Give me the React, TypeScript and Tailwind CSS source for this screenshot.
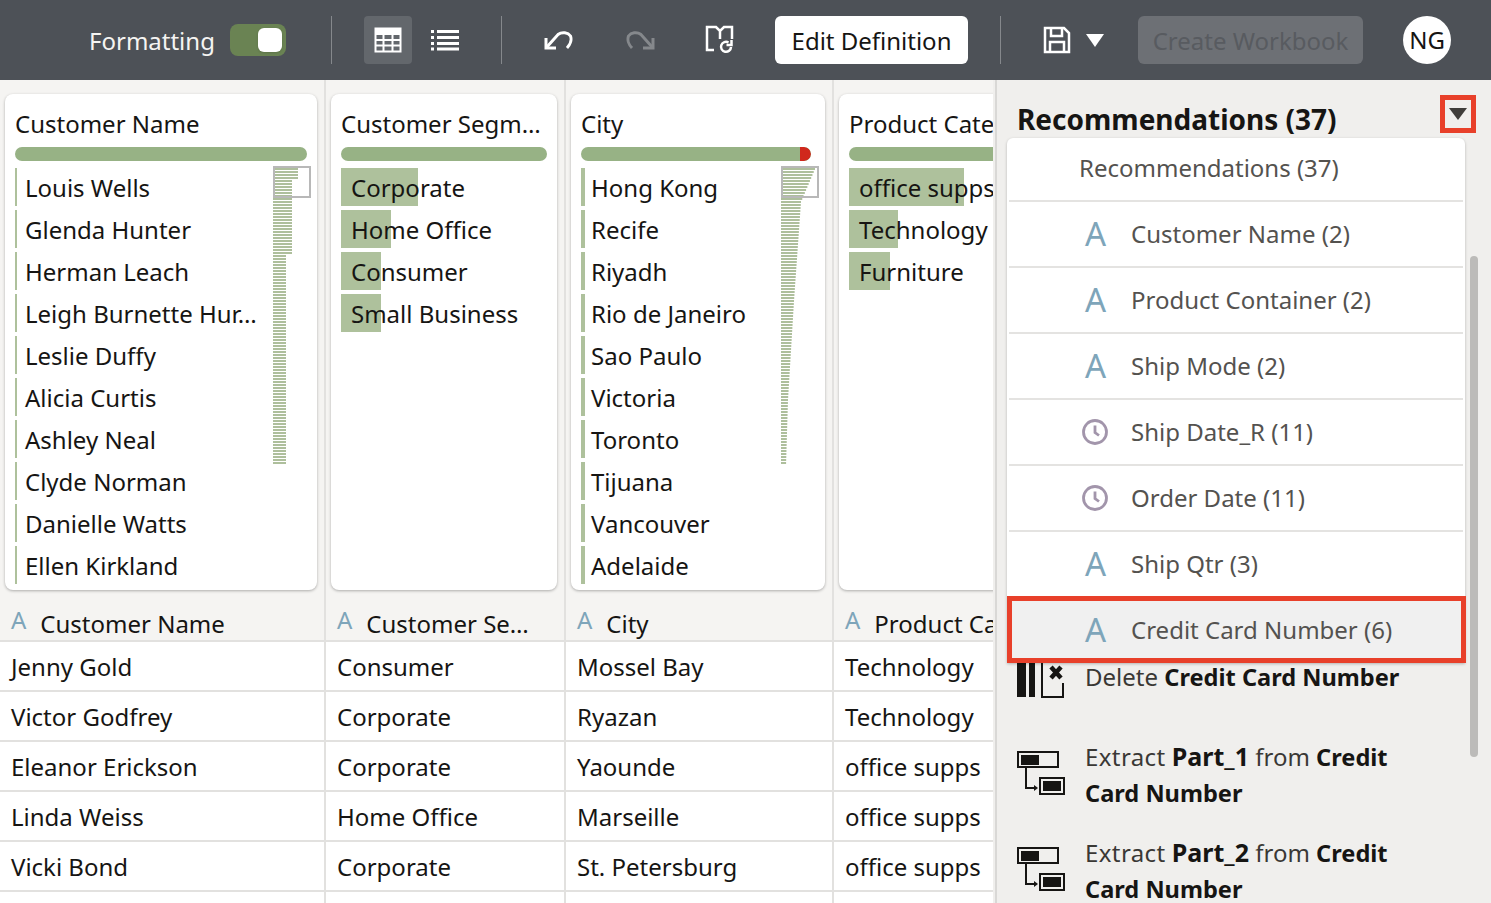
import React from "react";

const font = "font-['Noto_Sans','Open_Sans',sans-serif]";

type FilterRow = { label: string; pct: number };

const customers = ["Louis Wells", "Glenda Hunter", "Herman Leach", "Leigh Burnette Hur…", "Leslie Duffy", "Alicia Curtis", "Ashley Neal", "Clyde Norman", "Danielle Watts", "Ellen Kirkland"];
const cities = ["Hong Kong", "Recife", "Riyadh", "Rio de Janeiro", "Sao Paulo", "Victoria", "Toronto", "Tijuana", "Vancouver", "Adelaide"];

const columns = [
  {
    width: "w-[326px]",
    barMargin: "mr-[10px]",
    title: "Customer Name",
    head: "Customer Name",
    rows: customers.map((label) => ({ label, pct: 2 })),
    cells: ["Jenny Gold", "Victor Godfrey", "Eleanor Erickson", "Linda Weiss", "Vicki Bond"],
    chart: "customer",
  },
  {
    width: "w-[240px]",
    barMargin: "mr-[10px]",
    title: "Customer Segm…",
    head: "Customer Se…",
    rows: [
      { label: "Corporate", pct: 77 },
      { label: "Home Office", pct: 50 },
      { label: "Consumer", pct: 40 },
      { label: "Small Business", pct: 40 },
    ],
    cells: ["Consumer", "Corporate", "Corporate", "Home Office", "Corporate"],
  },
  {
    width: "w-[268px]",
    barMargin: "mr-[14px]",
    title: "City",
    head: "City",
    rows: cities.map((label) => ({ label, pct: 4 })),
    cells: ["Mossel Bay", "Ryazan", "Yaounde", "Marseille", "St. Petersburg"],
    chart: "city",
    red: true,
  },
  {
    width: "w-[162px]",
    barMargin: "mr-0 rounded-r-none",
    title: "Product Category",
    head: "Product Category",
    rows: [
      { label: "office supps", pct: 115 },
      { label: "Technology", pct: 49 },
      { label: "Furniture", pct: 41 },
    ],
    cells: ["Technology", "Technology", "office supps", "office supps", "office supps"],
    clip: true,
  },
];

const menuItems = [
  { label: "Customer Name (2)", type: "text" },
  { label: "Product Container (2)", type: "text" },
  { label: "Ship Mode (2)", type: "text" },
  { label: "Ship Date_R (11)", type: "date" },
  { label: "Order Date (11)", type: "date" },
  { label: "Ship Qtr (3)", type: "text" },
];

// widths of the city overview bars, read off the picture at a few points
const cityStops: [number, number][] = [[0, 34], [11, 20], [44, 13], [77, 7], [99, 5]];

const cityWidth = (i: number) => {
  for (let s = 1; s < cityStops.length; s++) {
    const [i0, w0] = cityStops[s - 1];
    const [i1, w1] = cityStops[s];
    if (i <= i1) return w0 + ((w1 - w0) * (i - i0)) / (i1 - i0);
  }
  return 5;
};

const MiniChart = ({ kind }: { kind: string }) => {
  const bars = Array.from({ length: 99 }, (_, i) => {
    if (kind === "customer") return i < 4 ? 25 : i < 29 ? 19 : 13;
    return cityWidth(i);
  });
  return (
    <svg width="38" height="302" viewBox="0 0 38 302" className="mt-[-2px] shrink-0">
      {bars.map((w, i) => (
        <rect key={i} x={0} y={2 + i * 3} width={w} height={2} fill="#aebf9c" />
      ))}
      <rect x="1" y="1" width="36" height="30" fill="none" stroke="#b8b8b8" strokeWidth="2" />
    </svg>
  );
};

const FilterCard = ({ col, index }: { col: (typeof columns)[number]; index: number }) => {
  return (
    <div className={`h-[496px] bg-white rounded-lg shadow-[0_1px_3px_rgba(0,0,0,0.3)] pl-[10px] pt-[13px] overflow-hidden ${col.clip ? "mr-[-8px] rounded-r-none" : ""}`}>
      <div className="text-[24px] leading-[34px] text-[#161513] whitespace-nowrap">{col.title}</div>
      <div className={`relative h-[14px] mt-[6px] rounded-full bg-[#97b285] overflow-hidden ${col.barMargin}`}>
        {col.red && <div className="absolute right-0 top-0 h-full w-[11px] bg-[#d0281c] rounded-r-full" />}
      </div>
      <div className="flex mt-[7px]">
        <div className="flex flex-col gap-[4px] flex-1 min-w-0">
          {col.rows.map((r: FilterRow) => (
            <div key={r.label} className="relative h-[38px] shrink-0">
              <div
                className={index === 0 ? "absolute left-0 top-0 h-full bg-[#aec19c] w-[2px]" : "absolute left-0 top-0 h-full bg-[#aec19c]"}
                style={index === 0 ? undefined : { width: r.pct }}
              />
              <div className="relative pl-[10px] text-[24px] leading-[40px] text-[#161513] whitespace-nowrap">{r.label}</div>
            </div>
          ))}
        </div>
        {col.chart && <div className="mr-[6px]"><MiniChart kind={col.chart} /></div>}
      </div>
    </div>
  );
};

const LetterIcon = ({ small }: { small?: boolean }) => (
  <span className={small ? "text-[24px] leading-[24px] text-[#7ea5ba] -translate-y-1" : "text-[33px] leading-[32px] text-[#7ea5ba]"}>A</span>
);

const ClockIcon = () => (
  <svg width="28" height="28" viewBox="0 0 28 28" fill="none" stroke="#a295ab" strokeWidth="2.8">
    <circle cx="14" cy="14" r="11.500" />
    <path d="M14 7.500v7l4 3" />
  </svg>
);

const ExtractIcon = () => (
  <svg width="48" height="44" viewBox="0 0 48 44" fill="none" stroke="#161513" strokeWidth="2">
    <rect x="1" y="1" width="40" height="15" />
    <rect x="4" y="4" width="18" height="10" fill="#161513" stroke="none" />
    <path d="M9 17v20h9" />
    <path d="M17 34l4 3-4 3z" fill="#161513" stroke="none" />
    <rect x="23" y="27" width="24" height="16" />
    <rect x="26" y="30" width="18" height="10" fill="#161513" stroke="none" />
  </svg>
);

const DeleteIcon = () => (
  <svg width="48" height="37" viewBox="0 0 48 37" fill="none">
    <rect x="0" y="0" width="9" height="35" fill="#161513" />
    <rect x="12" y="0" width="6" height="35" fill="#161513" />
    <path d="M25 0v35h21V21" stroke="#161513" strokeWidth="2" />
    <path d="M34 5l10 11M44 5L34 16" stroke="#161513" strokeWidth="4.500" />
  </svg>
);

const ExtractRow = ({ part }: { part: string }) => (
  <div className="flex h-[96px] pl-[10px]">
    <div className="w-[68px] shrink-0 pt-[13px]"><ExtractIcon /></div>
    <div className="text-[#3a3835] w-[340px]">
      <span className="tracking-[0.4px]">Extract</span> <b className="text-[25px] text-[#161513]">{part}</b> from <b className="text-[23.6px] text-[#161513]">Credit Card Number</b>
    </div>
  </div>
);

export default function App() {
  return (
    <div className={`${font} w-[1491px] h-[903px] overflow-hidden bg-white flex flex-col`}>
      {/* Toolbar */}
      <div className="h-[80px] shrink-0 bg-[#4d5157] flex items-center pl-[89px]">
        <span className="text-[24px] leading-[34px] pt-[1px] text-[#f5f4f2] w-[141px] whitespace-nowrap">Formatting</span>
        <div className="w-[56px] h-[32px] rounded-lg bg-[#6a8353] flex items-center justify-end pr-[4px]">
          <div className="w-[24px] h-[24px] rounded-md bg-white shadow" />
        </div>
        <div className="w-px h-[48px] bg-[#85888c] ml-[45px] mr-[32px]" />
        <div className="w-[48px] h-[48px] rounded bg-[#63676c] flex items-center justify-center">
          <svg width="28" height="26" viewBox="0 0 28 26" fill="none" stroke="#fff" strokeWidth="2">
            <rect x="1.500" y="1.500" width="25" height="23" />
            <path d="M1.500 5h25" strokeWidth="6" />
            <path d="M1.500 13h25M1.500 18.500h25M9.500 8v16M18.500 8v16" />
          </svg>
        </div>
        <div className="w-[48px] h-[48px] ml-[9px] flex items-center justify-center">
          <svg width="28" height="22" viewBox="0 0 28 22" fill="none" stroke="#fff" strokeWidth="3">
            <path d="M0 2.500h3M6 2.500h22M0 8.500h3M6 8.500h22M0 14.500h3M6 14.500h22M0 20h3M6 20h22" />
          </svg>
        </div>
        <div className="w-px h-[48px] bg-[#85888c] ml-[32px] mr-[42px]" />
        <svg width="30" height="20" viewBox="0 0 30 20" fill="none" stroke="#fff" strokeWidth="3" className="mt-[1px]">
          <path d="M2 17L14 3.500c4-3 10-2 12.500 1.500 1.500 4-.5 9-3.500 12" />
          <path d="M2 7v10h10" />
        </svg>
        <svg width="30" height="20" viewBox="0 0 30 20" fill="none" stroke="#85888c" strokeWidth="3" className="ml-[51px] mt-[1px]">
          <path d="M28 17L16 3.500c-4-3-10-2-12.500 1.500C2 9 4 14 7 17" />
          <path d="M28 7v10H18" />
        </svg>
        <svg width="30" height="30" viewBox="0 0 30 30" fill="none" stroke="#fff" strokeWidth="2.500" className="ml-[49px] mb-[1px]">
          <path d="M10 25H3V2h9l4 4 4-4h8v12M16 6v8" />
          <path d="M27 22a5 5 0 1 1-2.500-4.500" />
          <path d="M27.500 15v5h-5" />
        </svg>
        <button className="w-[193px] h-[48px] ml-[41px] rounded-md bg-white text-[24px] pt-[1px] text-[#161513]">Edit Definition</button>
        <div className="w-px h-[48px] bg-[#85888c] ml-[32px] mr-[42px]" />
        <svg width="28" height="28" viewBox="0 0 28 28" fill="none" stroke="#fff" strokeWidth="2.500">
          <path d="M2 2h19l5 5v19H2z" />
          <path d="M8 2v8h11V2M7 26V16h14v10" />
        </svg>
        <div className="w-0 h-0 ml-[15px] border-l-[9px] border-r-[9px] border-t-[13px] border-l-transparent border-r-transparent border-t-white" />
        <div className="w-[225px] h-[48px] ml-[34px] rounded-md bg-[#6d7075] text-[24px] leading-[50px] text-center text-[#585b60]">Create Workbook</div>
        <div className="w-[48px] h-[48px] ml-[40px] rounded-full bg-white text-[24px] leading-[48px] text-center text-[#161513]">NG</div>
      </div>

      <div className="flex flex-1 min-h-0">
        {/* Data columns */}
        <div className="w-[995px] shrink-0 flex overflow-hidden border-r-2 border-[#f0efed]">
          {columns.map((col, index) => (
            <div key={col.title} className={`${col.width} shrink-0 flex flex-col ${index < 3 ? "border-r-2 border-[#e2e1df]" : ""}`}>
              <div className="bg-[#f5f4f2] pl-[5px] pr-[7px] pt-[14px] h-[560px] shrink-0 flex flex-col">
                <FilterCard col={col} index={index} />
                <div className="flex items-baseline pl-[6px] mt-[16px] h-[34px] whitespace-nowrap">
                  <LetterIcon small />
                  <span className="ml-[14px] text-[24px] leading-[35px] text-[#161513]">{col.head}</span>
                </div>
              </div>
              {col.cells.map((c, i) => (
                <div key={i} className="h-[50px] shrink-0 border-t-2 border-[#e2e1df] pl-[11px] text-[24px] leading-[50px] text-[#161513] whitespace-nowrap overflow-hidden">
                  {c}
                </div>
              ))}
              <div className="h-[50px] shrink-0 border-t-2 border-[#e2e1df]" />
            </div>
          ))}
        </div>

        {/* Recommendations panel */}
        <div className="relative flex-1 min-w-0 bg-[#f0efed] border-l-2 border-[#d9d8d6] pl-[10px] overflow-hidden">
          <div className="relative h-[58px] pl-[10px] pt-[19px] text-[28px] leading-[40px] font-bold text-[#161513] whitespace-nowrap">Recommendations (37)</div>
          <div className="absolute left-[443px] top-[15px] w-[36px] h-[38px] border-[5px] border-[#e8402a] flex items-center justify-center">
            <div className="w-0 h-0 border-l-[9px] border-r-[9px] border-t-[12px] border-l-transparent border-r-transparent border-t-[#3f3d3a]" />
          </div>
          <div className="relative z-10 w-[458px] bg-white rounded-t-md shadow-[0_1px_3px_rgba(0,0,0,0.25)] px-[2px]">
            <div className="h-[64px] pl-[70px] text-[24px] leading-[60px] text-[#54524f] border-b-2 border-[#e4e3e1]">Recommendations (37)</div>
            {menuItems.map((m) => (
              <div key={m.label} className="h-[66px] flex items-center border-b-2 border-[#e4e3e1] text-[24px] text-[#54524f]">
                <div className={`w-[122px] flex items-center ${m.type === "text" ? "pl-[76px]" : "pl-[72px]"}`}>
                  {m.type === "text" ? <LetterIcon /> : <ClockIcon />}
                </div>
                {m.label}
              </div>
            ))}
            <div className="h-[67px] ml-[-2px] mr-[-3px] flex items-center border-[5px] border-[#e8402a] bg-[#f0f0f0] text-[24px] text-[#54524f] mt-[-2px]">
              <div className="w-[119px] pl-[73px] flex items-center"><LetterIcon /></div>
              Credit Card Number (6)
            </div>
          </div>
          <div className="flex flex-col text-[24px] leading-[36px] text-[#161513] mt-[-4px]">
            <div className="flex h-[79px] pl-[10px]">
              <div className="w-[68px] shrink-0 pt-[3px]"><DeleteIcon /></div>
              <div className="text-[#3a3835]">Delete <b className="text-[23.6px] text-[#161513]">Credit Card Number</b></div>
            </div>
            <ExtractRow part="Part_1" />
            <ExtractRow part="Part_2" />
          </div>
          <div className="absolute left-[473px] top-[176px] w-[8px] h-[501px] rounded-full bg-[#bcbbb9]" />
        </div>
      </div>
    </div>
  );
}
